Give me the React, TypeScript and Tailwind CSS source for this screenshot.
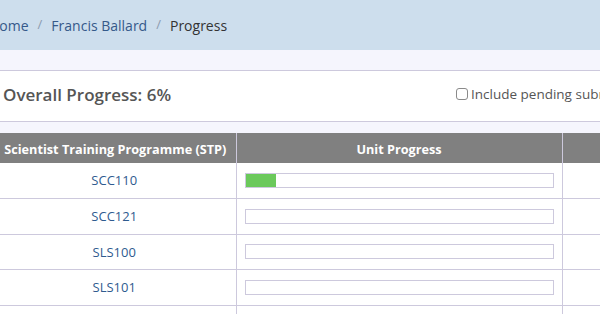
import React from 'react';

const units = [
  { code: 'SCC110', pct: 10 },
  { code: 'SCC121', pct: 0 },
  { code: 'SLS100', pct: 0 },
  { code: 'SLS101', pct: 0 },
  { code: 'SLS102', pct: 0 },
];

export default function App() {
  return (
    <div className="w-[600px] h-[314px] overflow-hidden bg-white font-['Open_Sans',sans-serif]">
      <div className="-ml-[40px] w-[720px]">
        {/* Breadcrumb bar */}
        <div className="h-[50px] bg-[#cddeed] flex items-center pl-[29px] text-[14px] whitespace-nowrap">
          <span className="text-[#35598a]">Home</span>
          <span className="text-[#8c9bb0] px-[9px] text-[13px]">/</span>
          <span className="text-[#35598a]">Francis Ballard</span>
          <span className="text-[#8c9bb0] px-[9px] text-[13px]">/</span>
          <span className="text-[#333]">Progress</span>
        </div>
        <div className="h-[21px] bg-[#f5f5fd] border-b border-[#cdc9dd]" />

        {/* Overall progress */}
        <div className="h-[51px] flex items-center border-b border-[#cdc9dd] whitespace-nowrap">
          <div className="w-[496px] pl-[43px] -mt-[3px] text-[17px] font-semibold text-[#555]">
            Overall Progress: 6%
          </div>
          <label className="flex items-center gap-[3px] text-[13.5px] text-[#555] -mt-[4px]">
            <span className="w-[12px] h-[12px] rounded-[3px] border border-[#8a8a8a] bg-white" />
            Include pending submissions
          </label>
        </div>
        <div className="h-[11px] bg-[#f5f5fd]" />

        {/* Table */}
        <table className="ml-[33px] w-[690px] table-fixed border-collapse text-[13px]">
          <colgroup>
            <col className="w-[243px]" />
            <col className="w-[326px]" />
            <col className="w-[121px]" />
          </colgroup>
          <thead>
            <tr className="h-[30px] bg-[#808080] text-white text-[12.7px]">
              <th className="border-r border-[#cdc9dd] pt-[3px] pl-[2px] font-bold whitespace-nowrap">
                Scientist Training Programme (STP)
              </th>
              <th className="border-r border-[#cdc9dd] pt-[3px] font-bold">Unit Progress</th>
              <th className="pt-[3px] font-bold">Status</th>
            </tr>
          </thead>
          <tbody>
            {units.map((u) => (
              <tr key={u.code} className="h-[35.5px] border-b border-[#cdc9dd]">
                <td className="border-r border-[#cdc9dd] text-center text-[#2f5b8f] pt-[1px]">{u.code}</td>
                <td className="border-r border-[#cdc9dd] pl-[8px] pr-[8px]">
                  <div className="h-[15px] border border-[#cdc9dd] bg-white">
                    <div className="h-full bg-[#6bc95b]" style={{ width: `${u.pct}%` }} />
                  </div>
                </td>
                <td />
              </tr>
            ))}
          </tbody>
        </table>
      </div>
    </div>
  );
}
